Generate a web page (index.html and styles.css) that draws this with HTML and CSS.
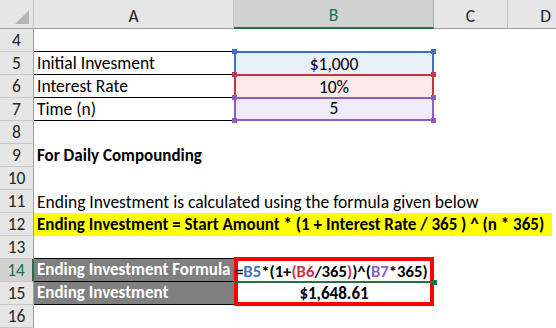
FILE: index.html
```html
<!DOCTYPE html>
<html>
<head>
<meta charset="utf-8">
<link rel="stylesheet" href="styles.css">
</head>
<body>
<div class="sheet">
  <div class="corner"><span class="tri"></span></div>
  <div class="colh">A</div>
  <div class="colh sel">B</div>
  <div class="colh">C</div>
  <div class="colh last">D</div>

  <div class="rh">4</div><div class="c"></div><div class="c"></div><div class="c"></div><div class="c"></div>

  <div class="rh">5</div>
  <div class="c lbl top bot">Initial Invesment</div>
  <div class="c val rng blue">$1,000<span class="h tl"></span><span class="h tr"></span></div>
  <div class="c"></div><div class="c"></div>

  <div class="rh">6</div>
  <div class="c lbl bot">Interest Rate</div>
  <div class="c val rng red">10%<span class="h tl"></span><span class="h tr"></span></div>
  <div class="c"></div><div class="c"></div>

  <div class="rh">7</div>
  <div class="c lbl bot">Time (n)</div>
  <div class="c val rng purple last-rng">5<span class="h tl"></span><span class="h tr"></span><span class="h bl"></span><span class="h br"></span></div>
  <div class="c"></div><div class="c"></div>

  <div class="rh">8</div><div class="c"></div><div class="c"></div><div class="c"></div><div class="c"></div>

  <div class="rh">9</div>
  <div class="c lbl wide bold">For Daily Compounding</div>

  <div class="rh">10</div><div class="c"></div><div class="c"></div><div class="c"></div><div class="c"></div>

  <div class="rh">11</div>
  <div class="c lbl wide">Ending Investment is calculated using the formula given below</div>

  <div class="rh">12</div>
  <div class="c lbl wide bold yellow">Ending Investment = Start Amount * (1 + Interest Rate / 365 ) ^ (n * 365)</div>

  <div class="rh">13</div><div class="c"></div><div class="c"></div><div class="c"></div><div class="c"></div>

  <div class="rh selrow">14</div>
  <div class="c lbl dark top bot">Ending Investment Formula</div>
  <div class="c formula"><span class="txt">=<span class="fb">B5</span>*(1+<span class="fr">(B6</span>/365<span class="fr">)</span>)^(<span class="fp">B7</span>*365)</span><span class="edit"></span><span class="eh"></span></div>
  <div class="c"></div><div class="c"></div>

  <div class="rh">15</div>
  <div class="c lbl dark bot">Ending Investment</div>
  <div class="c val bold result">$1,648.61</div>
  <div class="c"></div><div class="c"></div>

  <div class="rh">16</div><div class="c"></div><div class="c"></div><div class="c"></div><div class="c"></div>
</div>
</body>
</html>
```

FILE: styles.css
```css
html {
  margin: 0;
  padding: 0;
  overflow: hidden;
  width: 556px;
}
body {
  margin: 0;
  padding: 0;
  background: #fff;
  width: 556px;
  height: 328px;
  overflow: hidden;
  font-family: Carlito, Calibri, Lato, "Liberation Sans", sans-serif;
  font-size: 17.5px;
  color: #000;
}
.sheet {
  display: grid;
  grid-template-columns: 34px 200px 200px 74px 48px;
  grid-template-rows: 29px repeat(13, 23px);
  width: 556px;
  overflow: hidden;
}
.sheet > div {
  box-sizing: border-box;
  min-width: 0;
}
.corner {
  background: #e6e6e6;
  border-right: 1px solid #c4c4c4;
  border-bottom: 1px solid #9e9e9e;
  position: relative;
}
.tri {
  position: absolute;
  right: 4px;
  bottom: 4px;
  width: 0;
  height: 0;
  border-left: 14px solid transparent;
  border-bottom: 14px solid #b5b5b5;
}
.colh {
  background: #e6e6e6;
  border-right: 1px solid #c4c4c4;
  border-bottom: 1px solid #9e9e9e;
  display: flex;
  align-items: center;
  justify-content: center;
  color: #262626;
  padding-top: 3px;
}
.colh.last {
  justify-content: flex-end;
  padding-right: 5px;
  border-right: none;
}
.colh.sel {
  background: #d2d2d2;
  color: #217346;
  border-bottom: 2px solid #217346;
  border-right-color: #ababab;
}
.rh {
  background: #e6e6e6;
  border-right: 1px solid #9e9e9e;
  border-bottom: 1px solid #c8c8c8;
  display: flex;
  align-items: flex-end;
  justify-content: center;
  color: #262626;
  line-height: 22px;
}
.rh.selrow {
  background: #d2d2d2;
  color: #217346;
  border-right: 2px solid #217346;
}
.c {
  display: flex;
  align-items: flex-end;
  line-height: 22px;
  white-space: nowrap;
  position: relative;
}
.lbl {
  padding-left: 3px;
}
.wide {
  grid-column: 2 / -1;
}
.bold {
  font-weight: bold;
  font-size: 17px;
}
.top {
  border-top: 1px solid #000;
  margin-top: -1px;
}
.bot {
  border-bottom: 1px solid #000;
}
.yellow {
  background: #ffff00;
  margin-right: 4px;
}
.dark {
  background: #808080;
  color: #fff;
  font-weight: bold;
  font-size: 17px;
}
.val {
  justify-content: center;
}
.rng {
  border: 2px solid;
  border-bottom: none;
  margin-top: -1px;
}
.rng.last-rng {
  border-bottom: 2px solid #8e5cc4;
}
.blue { border-color: #3d6fc6; background: #e9eff9; }
.red { border-color: #c8353f; background: #fbe9ea; }
.purple { border-color: #8e5cc4; background: #f0ebf8; }
.h {
  position: absolute;
  width: 5px;
  height: 5px;
  z-index: 2;
}
.blue .h { background: #3d6fc6; }
.red .h { background: #c8353f; }
.purple .h { background: #8e5cc4; }
.h.tl { left: -4px; top: -4px; }
.h.tr { right: -4px; top: -4px; }
.h.bl { left: -4px; bottom: -4px; }
.h.br { right: -4px; bottom: -4px; }

.formula {
  font-weight: bold;
  font-size: 16.7px;
  padding-left: 1px;
}
.formula::before {
  content: "";
  position: absolute;
  left: 0;
  right: 0;
  top: -2px;
  height: 49px;
  border: 4px solid #ff0000;
  box-sizing: border-box;
}
.formula .txt {
  position: relative;
  z-index: 1;
}
.edit {
  position: absolute;
  left: 0;
  right: -1px;
  bottom: -1px;
  height: 2px;
  background: #217346;
  z-index: 1;
}
.eh {
  position: absolute;
  right: -3px;
  bottom: -3px;
  width: 5px;
  height: 5px;
  background: #217346;
  z-index: 1;
}
.fb { color: #3d6fc6; }
.fr { color: #c8353f; }
.fp { color: #8e5cc4; }
```
